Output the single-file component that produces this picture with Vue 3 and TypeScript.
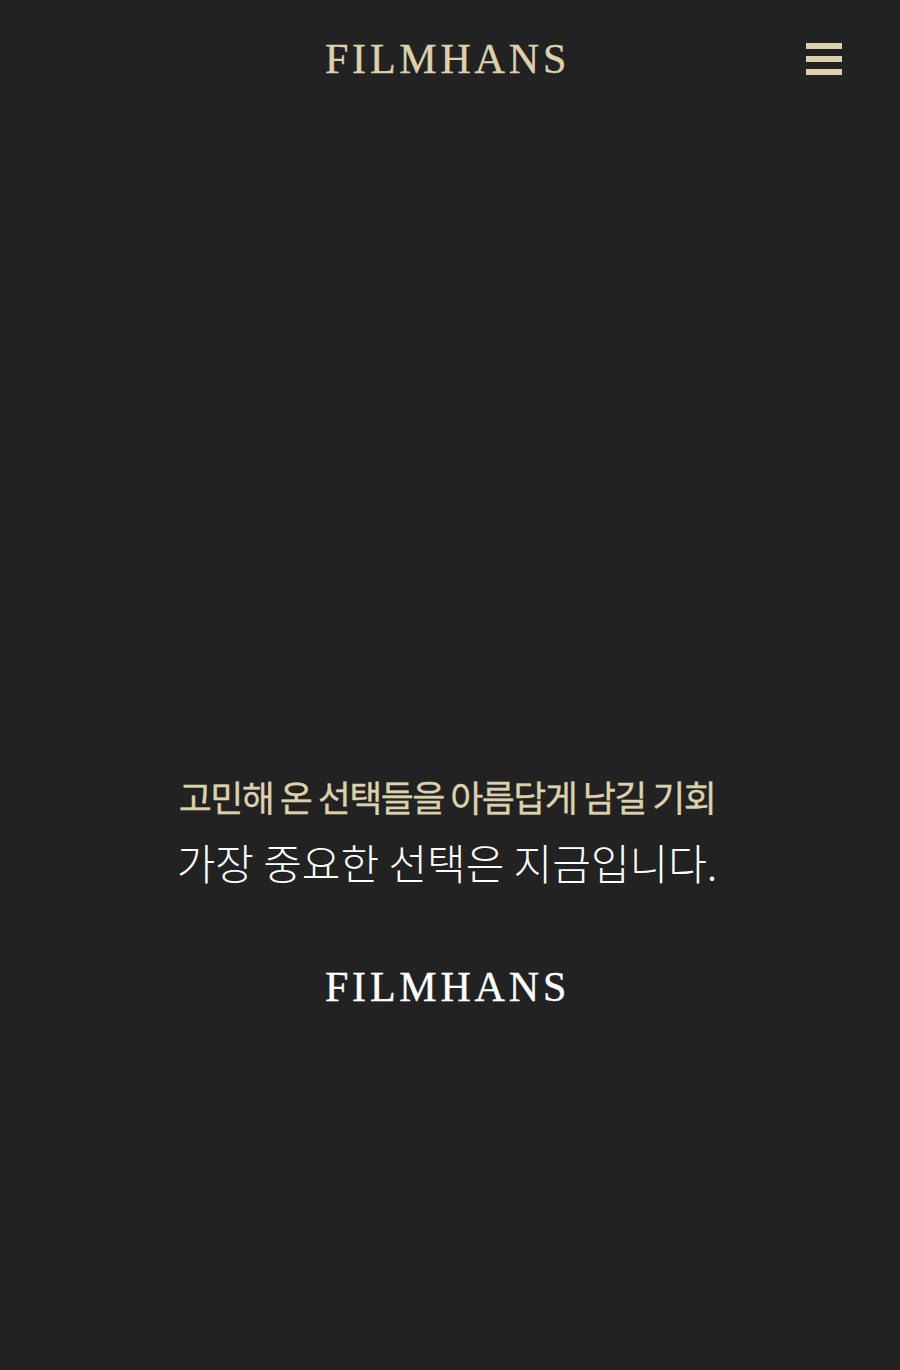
<template>
    <div class="page">
        <header class="top-bar">
            <div class="logo">FILMHANS</div>
            <button class="menu-btn" aria-label="menu">
                <span v-for="n in 3" :key="n" class="menu-line"></span>
            </button>
        </header>
        <main class="hero">
            <p class="hero-sub">고민해 온 선택들을 아름답게 남길 기회</p>
            <p class="hero-title">가장 중요한 선택은 지금입니다.</p>
            <div class="hero-brand">FILMHANS</div>
        </main>
    </div>
</template>

<script setup lang="ts">
</script>

<style>
html,
body {
    margin: 0;
    background: #222222;
}
</style>

<style scoped>
.page {
    width: 900px;
    height: 1370px;
    background: #222222;
    display: flex;
    flex-direction: column;
    overflow: hidden;
}

.top-bar {
    position: relative;
    height: 118px;
    display: flex;
    justify-content: center;
    padding-top: 36px;
    box-sizing: border-box;
}

.logo,
.hero-brand {
    font-family: "Liberation Serif", serif;
    font-size: 42px;
    line-height: 46px;
    letter-spacing: 3.8px;
    margin-left: -5px;
    -webkit-text-stroke: 0.4px currentColor;
}

.logo {
    color: #ddd1ad;
}

.menu-btn {
    position: absolute;
    top: 43px;
    right: 58px;
    width: 36px;
    height: 32px;
    padding: 0;
    border: 0;
    background: none;
    display: flex;
    flex-direction: column;
    justify-content: space-between;
}

.menu-line {
    display: block;
    height: 6px;
    background: #ddd1ad;
}

.hero {
    display: flex;
    flex-direction: column;
    align-items: center;
    padding-top: 654px;
}

.hero-sub {
    margin: 0 0 0 -6px;
    font-family: "Noto Sans CJK KR", sans-serif;
    font-size: 36px;
    line-height: 48px;
    letter-spacing: -1.6px;
    color: #ddd1ad;
    -webkit-text-stroke: 0.3px currentColor;
}

.hero-title {
    margin: 14px 0 0 -6px;
    font-family: "Noto Sans CJK KR", sans-serif;
    font-weight: 300;
    font-size: 42px;
    line-height: 56px;
    letter-spacing: 0;
    color: #ffffff;
}

.hero-brand {
    margin-top: 74px;
    color: #ffffff;
}
</style>
